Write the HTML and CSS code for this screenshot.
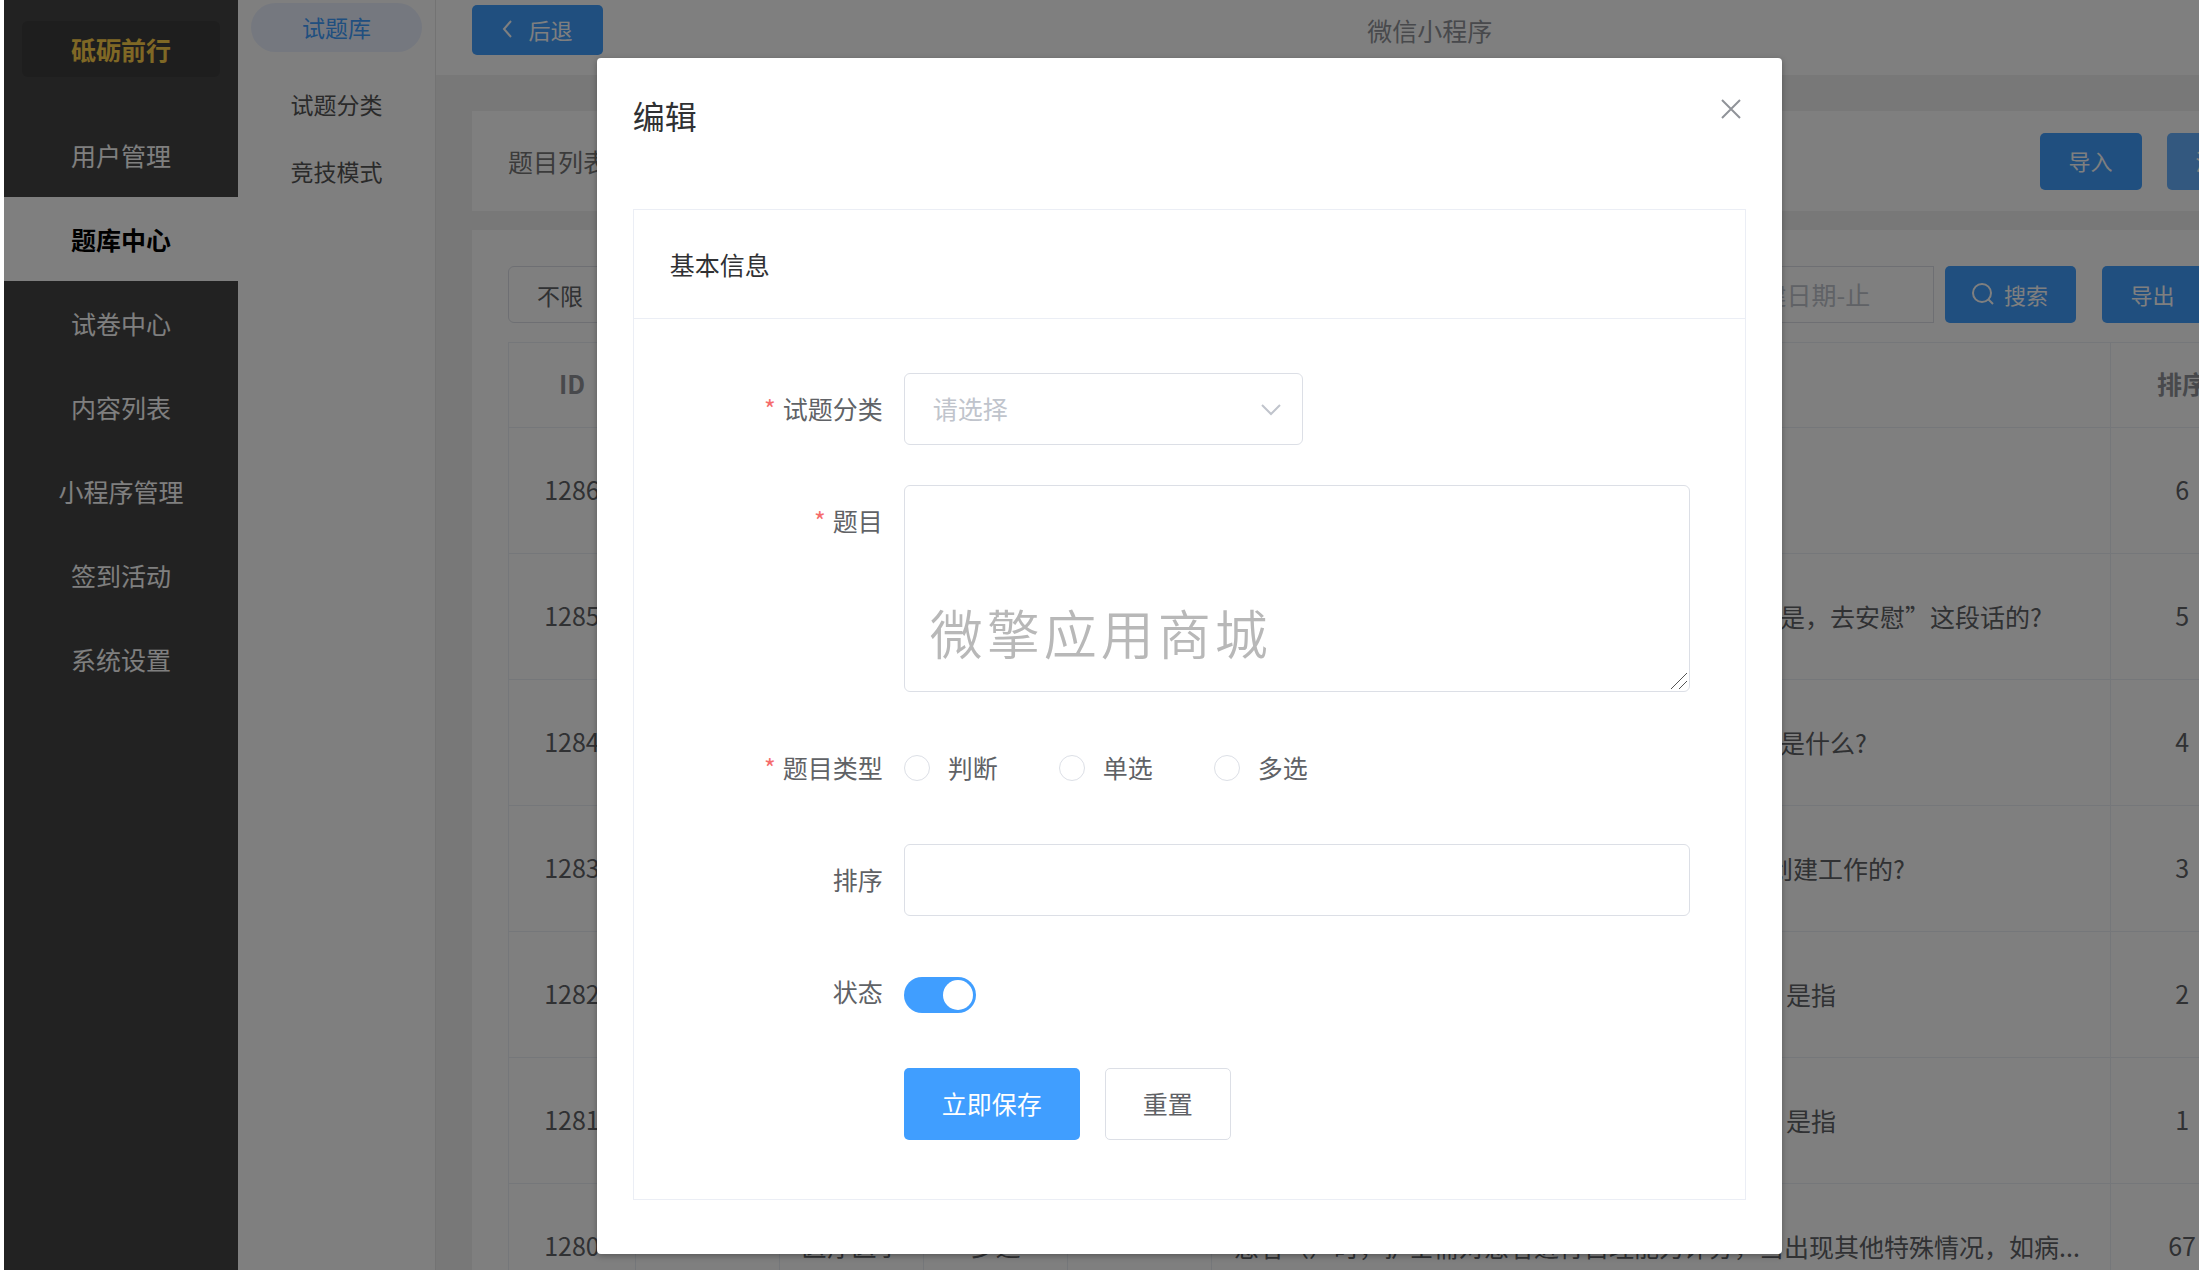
FILE: index.html
```html
<!DOCTYPE html>
<html lang="zh-CN">
<head>
<meta charset="utf-8">
<title>微信小程序</title>
<link rel="stylesheet" href="styles.css">
</head>
<body>
<div class="app">
  <nav class="sidebar">
    <div class="brand">砥砺前行</div>
    <a class="nav-item" href="#">用户管理</a>
    <a class="nav-item active" href="#">题库中心</a>
    <a class="nav-item" href="#">试卷中心</a>
    <a class="nav-item" href="#">内容列表</a>
    <a class="nav-item" href="#">小程序管理</a>
    <a class="nav-item" href="#">签到活动</a>
    <a class="nav-item" href="#">系统设置</a>
  </nav>
  <nav class="subnav">
    <a class="sub-item current" href="#">试题库</a>
    <a class="sub-item" href="#">试题分类</a>
    <a class="sub-item" href="#">竞技模式</a>
  </nav>
  <main class="main">
    <header class="topbar">
      <button class="btn primary back" type="button">
        <svg width="10" height="18" viewBox="0 0 10 18" fill="none" stroke="currentColor" stroke-width="2"><path d="M9 1 2 9l7 8"/></svg>
        后退
      </button>
      <div class="topbar-title">微信小程序</div>
    </header>
    <section class="panel panel-head">
      <h2 class="panel-title">题目列表</h2>
      <div class="panel-actions">
        <button class="btn primary" type="button">导入</button>
        <button class="btn light" type="button">清空</button>
      </div>
    </section>
    <section class="panel panel-list">
      <div class="filters">
        <select class="filter-select" aria-label="分类"><option>不限</option></select>
        <input class="filter-date" type="text" placeholder="创建日期-止" aria-label="创建日期-止">
        <button class="btn primary search" type="button">
          <svg width="22" height="22" viewBox="0 0 22 22" fill="none" stroke="currentColor" stroke-width="2"><circle cx="10" cy="10" r="9"/><path d="m16 16 5 5"/></svg>
          搜索
        </button>
        <button class="btn primary" type="button">导出</button>
      </div>
      <table class="grid">
        <colgroup><col class="c-id"><col class="c-std"><col class="c-std"><col class="c-std"><col class="c-std"><col><col class="c-std"><col class="c-end"></colgroup>
        <thead><tr><th>ID</th><th></th><th></th><th></th><th></th><th></th><th>排序</th><th></th></tr></thead>
        <tbody>
          <tr><td>1286</td><td></td><td></td><td></td><td></td><td class="text"></td><td>6</td><td></td></tr>
          <tr><td>1285</td><td></td><td></td><td></td><td></td><td class="text tail">是，去安慰”这段话的?</td><td>5</td><td></td></tr>
          <tr><td>1284</td><td></td><td></td><td></td><td></td><td class="text tail">是什么?</td><td>4</td><td></td></tr>
          <tr><td>1283</td><td></td><td></td><td></td><td></td><td class="text tail-near">创建工作的?</td><td>3</td><td></td></tr>
          <tr><td>1282</td><td></td><td></td><td></td><td></td><td class="text tail-far">是指</td><td>2</td><td></td></tr>
          <tr><td>1281</td><td></td><td></td><td></td><td></td><td class="text tail-far">是指</td><td>1</td><td></td></tr>
          <tr><td>1280</td><td></td><td>医疗医学</td><td>多选</td><td></td><td class="text">患者（）时，护士需对患者进行自理能力评分，当出现其他特殊情况，如病...</td><td>67</td><td></td></tr>
        </tbody>
      </table>
    </section>
  </main>
  <div class="overlay">
    <div class="dialog" role="dialog" aria-labelledby="dialog-title">
      <div class="dialog-head">
        <h1 class="dialog-title" id="dialog-title">编辑</h1>
        <button class="close" type="button" aria-label="关闭">
          <svg width="20" height="20" viewBox="0 0 20 20" fill="none" stroke="currentColor" stroke-width="2"><path d="m1 1 18 18M19 1 1 19"/></svg>
        </button>
      </div>
      <section class="card">
        <h2 class="card-title">基本信息</h2>
        <form class="form">
          <div class="row">
            <label class="label required" for="category">试题分类</label>
            <div class="select-wrap">
              <select class="control" id="category"><option>请选择</option></select>
              <svg class="arrow" width="20" height="12" viewBox="0 0 20 12" fill="none" stroke="currentColor" stroke-width="2"><path d="m1 1 9 9 9-9"/></svg>
            </div>
          </div>
          <div class="row">
            <label class="label required" for="question">题目</label>
            <div class="area-wrap">
              <textarea class="control area" id="question"></textarea>
              <span class="watermark">微擎应用商城</span>
              <svg class="grip" width="17" height="17" viewBox="0 0 17 17" fill="none" stroke="#555" stroke-width="1"><path d="M0 16 16 0M8 16l8-8"/></svg>
            </div>
          </div>
          <div class="row">
            <span class="label required" id="type-label">题目类型</span>
            <div class="radios" role="radiogroup" aria-labelledby="type-label">
              <label class="radio"><input type="radio" name="type">判断</label>
              <label class="radio"><input type="radio" name="type">单选</label>
              <label class="radio"><input type="radio" name="type">多选</label>
            </div>
          </div>
          <div class="row">
            <label class="label" for="order">排序</label>
            <input class="control" id="order" type="text">
          </div>
          <div class="row">
            <label class="label" for="status">状态</label>
            <div class="switch-wrap"><input class="switch" id="status" type="checkbox" role="switch" checked></div>
          </div>
          <div class="row">
            <span class="label"></span>
            <div class="form-actions">
              <button class="btn primary large" type="button">立即保存</button>
              <button class="btn plain large" type="reset">重置</button>
            </div>
          </div>
        </form>
      </section>
    </div>
  </div>
</div>
</body>
</html>
```
FILE: styles.css
```css
* { box-sizing: border-box; }

body {
  margin: 0;
  height: 100vh;
  padding-left: 4px;
  overflow: hidden;
  background: #fff;
  color: #606266;
  font-family: "Noto Sans CJK SC", "Noto Sans", sans-serif;
  font-size: 25px;
  line-height: 36px;
}

a { text-decoration: none; }
h1, h2 { margin: 0; font-weight: 400; }
button, input, select, textarea { font: inherit; color: inherit; }
svg { flex: none; }

/* The admin frame is wider than its host and is cut at the right edge. */
.app {
  position: relative;
  display: flex;
  width: 108%;
  height: 100vh;
  overflow: hidden;
}

.sidebar {
  flex: 0 0 234px;
  display: flex;
  flex-direction: column;
  padding-top: 21px;
  background: #444;
}
.brand {
  margin: 0 18px 36px;
  border-radius: 6px;
  background: #3c3c3c;
  color: #ffd04b;
  font-weight: 700;
  line-height: 56px;
  text-align: center;
}
.nav-item {
  color: #fff;
  line-height: 84px;
  text-align: center;
}
.nav-item.active {
  background: #fff;
  color: #000;
  font-weight: 700;
}

.subnav {
  flex: 0 0 198px;
  display: flex;
  flex-direction: column;
  gap: 18px;
  padding: 3px 13px;
  border-right: 1px solid #e6e6e6;
  background: #fff;
}
.sub-item {
  border-radius: 25px;
  color: #555;
  font-size: 23px;
  line-height: 49px;
  text-align: center;
}
.sub-item.current {
  margin-bottom: 10px;
  background: #ebf1ff;
  color: #409eff;
}

.main {
  flex: 1;
  min-width: 0;
  background: #f0f0f0;
}
.topbar {
  display: flex;
  align-items: flex-start;
  height: 75px;
  padding: 5px 118px 0 36px;
  background: #fff;
}
.topbar-title {
  flex: 1;
  color: #909399;
  line-height: 50px;
  text-align: center;
}

.btn {
  display: inline-flex;
  align-items: center;
  justify-content: center;
  gap: 10px;
  height: 57px;
  padding: 0 28px 2px;
  border: 1px solid transparent;
  border-radius: 5px;
  font-size: 22px;
  white-space: nowrap;
}
.btn.primary { background: #409eff; color: #fff; }
.btn.light { width: 136px; justify-content: flex-start; background: #66b1ff; color: #fff; }
.btn.plain { border-color: #dcdfe6; background: #fff; color: #606266; }
.btn.large { height: 72px; padding: 0 37px 2px; font-size: 25px; }
.btn.back { width: 131px; height: 50px; gap: 16px; }
.btn.search { width: 131px; margin-right: 15px; }

.panel {
  margin: 0 36px;
  padding: 0 36px;
  background: #fff;
}
.panel-head {
  display: flex;
  align-items: center;
  justify-content: space-between;
  height: 100px;
  margin-top: 36px;
}
.panel-title { color: #777; font-size: 25px; }
.panel-actions { display: flex; gap: 25px; }

.panel-list {
  height: 100%;
  margin-top: 19px;
  padding-top: 36px;
}
.filters {
  display: flex;
  gap: 11px;
  padding-right: 99px;
}
.filter-select, .filter-date {
  height: 57px;
  border: 1px solid #dcdfe6;
  background: #fff;
}
.filter-select {
  width: 220px;
  margin-right: auto;
  padding: 0 28px;
  border-radius: 6px;
  appearance: none;
  font-size: 23px;
}
.filter-date { width: 234px; padding: 0 36px 2px; }
.filter-date::placeholder { color: #c0c4cc; opacity: 1; }

.grid {
  width: 100%;
  margin-top: 19px;
  border-collapse: collapse;
  table-layout: fixed;
}
.c-id { width: 127px; }
.c-std { width: 144px; }
.c-end { width: 48px; }
.grid th, .grid td {
  padding: 0 0 4px;
  border: 1px solid #ebeef5;
  text-align: center;
  white-space: nowrap;
}
.grid th { height: 85px; color: #909399; }
.grid td { height: 126px; }
.grid .text { padding: 0 0 2px 22px; overflow: hidden; text-align: left; }
.grid .tail-near { padding-left: 556px; }
.grid .tail { padding-left: 568px; }
.grid .tail-far { padding-left: 574px; }

.overlay {
  position: absolute;
  inset: 0;
  padding-top: 58px;
  background: rgba(0, 0, 0, .5);
}
.dialog {
  width: 50%;
  margin: 0 auto;
  padding: 36px 36px 54px;
  border-radius: 4px;
  background: #fff;
  box-shadow: 0 2px 6px rgba(0, 0, 0, .3);
}
.dialog-head {
  display: flex;
  align-items: flex-start;
  justify-content: space-between;
  height: 115px;
}
.dialog-title { color: #303133; font-size: 32px; line-height: 42px; }
.close {
  display: flex;
  padding: 5px 5px 0 0;
  border: 0;
  background: none;
  color: #909399;
}

.card { border: 1px solid #ebeef5; }
.card-title {
  padding: 36px;
  border-bottom: 1px solid #ebeef5;
  color: #303133;
  font-size: 25px;
}
.form {
  display: flex;
  flex-direction: column;
  gap: 40px;
  padding: 54px 55px 59px 36px;
}
.row {
  display: flex;
  align-items: flex-start;
  min-height: 72px;
}
.label {
  flex: 0 0 234px;
  padding-right: 21px;
  line-height: 71px;
  text-align: right;
}
.required::before {
  content: "*";
  margin-right: 7px;
  color: #f56c6c;
}
.control {
  display: block;
  width: 100%;
  height: 72px;
  padding: 0 28px 2px;
  border: 1px solid #dcdfe6;
  border-radius: 6px;
  background: #fff;
  outline: none;
}
.select-wrap { position: relative; width: 399px; }
.select-wrap .control { appearance: none; color: #c0c4cc; }
.arrow { position: absolute; top: 31px; right: 22px; color: #c0c4cc; pointer-events: none; }
.area-wrap { position: relative; flex: 1; }
.area { height: 207px; resize: vertical; }
.area::-webkit-resizer { background: transparent; }
.grip { position: absolute; right: 2px; bottom: 2px; pointer-events: none; }
.watermark {
  position: absolute;
  left: 26px;
  bottom: 24px;
  color: #b8b8b8;
  font-size: 53px;
  font-weight: 350;
  letter-spacing: 4px;
  line-height: 72px;
  pointer-events: none;
}
.radios { display: flex; gap: 61px; line-height: 71px; }
.radio { display: flex; align-items: center; gap: 18px; }
.radio input {
  width: 26px;
  height: 26px;
  margin: 0;
  border: 1px solid #dcdfe6;
  border-radius: 50%;
  background: #fff;
  appearance: none;
}
.switch-wrap { display: flex; align-items: flex-end; height: 57px; }
.switch {
  display: flex;
  justify-content: flex-end;
  width: 72px;
  height: 36px;
  margin: 0;
  padding: 3px;
  border-radius: 18px;
  background: #409eff;
  appearance: none;
}
.switch::before {
  content: "";
  width: 30px;
  height: 30px;
  border-radius: 50%;
  background: #fff;
}
.switch:not(:checked) { justify-content: flex-start; background: #dcdfe6; }
.form-actions { display: flex; gap: 25px; }
```
